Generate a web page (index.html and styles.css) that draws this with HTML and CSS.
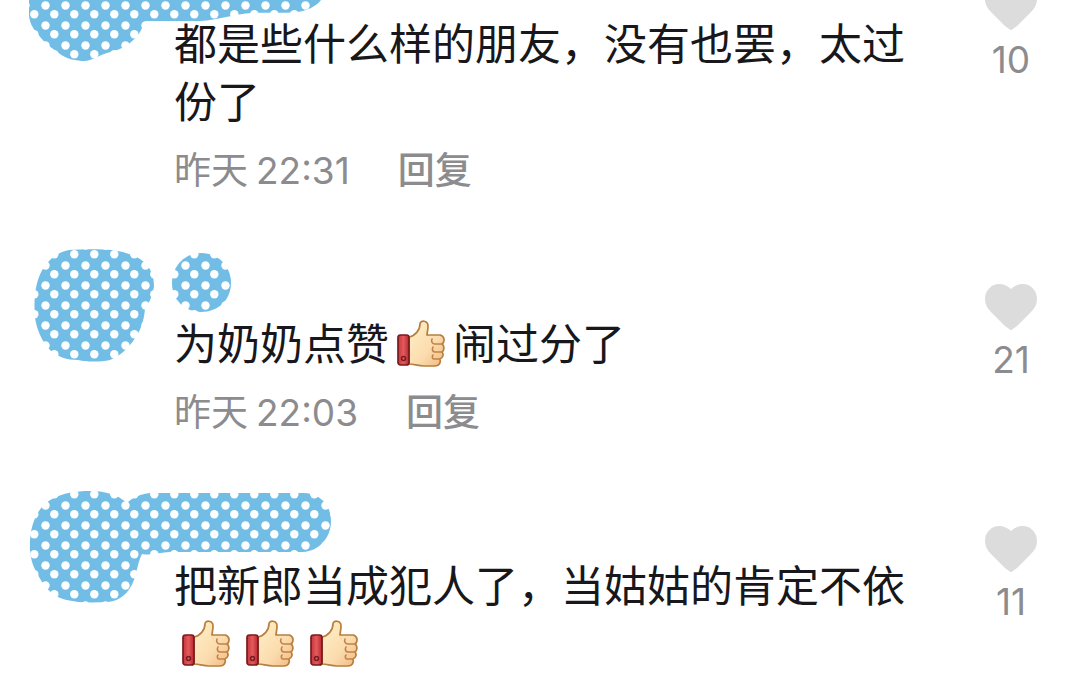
FILE: index.html
```
<!DOCTYPE html>
<html lang="zh-CN">
<head>
    <meta charset="UTF-8">
    <meta name="viewport" content="width=device-width, initial-scale=1.0">
    <title>评论</title>
    <link rel="stylesheet" href="styles.css">
</head>
<body>
    <svg class="defs" width="0" height="0" aria-hidden="true">
        <defs>
            <linearGradient id="skin" x1="0" y1="0" x2="1" y2="1">
                <stop offset="0" stop-color="#fff0c8"/>
                <stop offset="0.6" stop-color="#fbdcae"/>
                <stop offset="1" stop-color="#f2b77e"/>
            </linearGradient>
            <linearGradient id="cuff" x1="0" y1="0" x2="1" y2="0">
                <stop offset="0" stop-color="#c9353b"/>
                <stop offset="0.5" stop-color="#e25a5c"/>
                <stop offset="1" stop-color="#b8282f"/>
            </linearGradient>
        </defs>
        <symbol id="thumb" viewBox="0 0 48 48">
            <path d="M12 17C18 16 23 10 23 4C23 0 31 0 31 6C31 10 30 13 30 15H43C48 16 48 22 45 24C48 26 47 31 45 32C47 34 46 38 43 39C44 43 42 46 38 46H27C21 46 17 44 12 44Z" fill="url(#skin)" stroke="#b5803f" stroke-width="1.7" stroke-linejoin="round"/>
            <path d="M46 24H38C35 24 34 21 35 19M45 32H38C35 32 35 29 36 27M43 39H37C35 39 35 36 36 35" fill="none" stroke="#c08248" stroke-width="1.6" stroke-linecap="round"/>
            <rect x="1" y="15" width="11" height="30" rx="2.5" fill="url(#cuff)" stroke="#781b1e" stroke-width="1.7"/>
            <circle cx="6.5" cy="38.5" r="2" fill="#d95a5c" stroke="#781b1e" stroke-width="1.5"/>
        </symbol>
        <symbol id="heart" viewBox="0 0 52 46">
            <path d="M26 46C25 46 23 44 20 42L6 28C2 24 0 20 0 15C0 6 7 0 14 0C19 0 23 2 26 5C29 2 33 0 38 0C45 0 52 6 52 15C52 20 50 24 46 28L32 42C29 44 27 46 26 46Z" fill="#dcdcdc"/>
        </symbol>
    </svg>

    <main class="comments">
        <article class="comment">
            <div class="content">
                <p class="text">都是些什么样的朋友，没有也罢，太过份了</p>
                <div class="meta">
                    <span>昨天</span>
                    <time>22:31</time>
                    <button class="reply" type="button">回复</button>
                </div>
            </div>
            <button class="like" type="button" aria-label="赞 10">
                <svg class="heart" aria-hidden="true"><use href="#heart"/></svg>
                <span>10</span>
            </button>
        </article>

        <article class="comment">
            <div class="content">
                <p class="text">为奶奶点赞<svg class="emoji" role="img" aria-label="赞"><use href="#thumb"/></svg>闹过分了</p>
                <div class="meta">
                    <span>昨天</span>
                    <time>22:03</time>
                    <button class="reply" type="button">回复</button>
                </div>
            </div>
            <button class="like" type="button" aria-label="赞 21">
                <svg class="heart" aria-hidden="true"><use href="#heart"/></svg>
                <span>21</span>
            </button>
        </article>

        <article class="comment">
            <div class="content">
                <p class="text">把新郎当成犯人了，当姑姑的肯定不依<svg class="emoji" role="img" aria-label="赞"><use href="#thumb"/></svg><svg class="emoji" role="img" aria-label="赞"><use href="#thumb"/></svg><svg class="emoji" role="img" aria-label="赞"><use href="#thumb"/></svg></p>
            </div>
            <button class="like" type="button" aria-label="赞 11">
                <svg class="heart" aria-hidden="true"><use href="#heart"/></svg>
                <span>11</span>
            </button>
        </article>
    </main>

    <!-- dotted brush strokes that hide avatars and user names -->
    <svg class="strokes" aria-hidden="true">
        <defs>
            <pattern id="dots" width="20" height="20" patternUnits="userSpaceOnUse">
                <rect width="20" height="20" fill="#72bde6"/>
                <circle cx="5.5" cy="5.5" r="4.2" fill="#fff"/>
                <circle cx="14.3" cy="14.3" r="4.2" fill="#fff"/>
            </pattern>
        </defs>
        <g fill="url(#dots)">
            <path d="M29 0V14C29 22 33 29 38 34C44 43 52 48 60 54C67 59 76 61 85 61C94 60 99 55 107 53C116 51 123 48 130 43C137 37 141 32 143 25C143 22 145 21 149 21H200C218 20 235 14 252 13C270 12 289 14 303 11C311 9 318 4 321 0Z"/>
            <path d="M69 250C82 249 101 249 112 250C124 252 136 255 144 262C151 268 154 277 154 286C153 295 149 303 145 309C144 320 141 330 135 338C129 348 120 356 110 360C100 362 88 362 78 360C67 360 58 357 50 350C42 342 37 330 35 318C34 306 34 290 39 277C44 264 54 253 69 250Z"/>
            <path d="M201 253C218 253 231 266 231 283C231 300 218 312 201 312C185 312 172 300 172 283C172 266 185 253 201 253Z"/>
            <path d="M90 491C104 491 117 494 127 503C133 497 141 494 150 493H303C320 493 331 505 331 521C331 538 319 551 303 552H170C160 552 152 556 142 554C138 562 137 571 134 580C129 593 120 601 108 602C90 603 71 603 58 597C48 592 42 583 37 573C32 565 29 553 30 541C31 524 37 507 52 499C63 493 76 491 90 491Z"/>
        </g>
    </svg>
</body>
</html>
```
FILE: styles.css
```
* {
    box-sizing: border-box;
}
body {
    margin: 0;
    height: 100vh;
    overflow: hidden;
    position: relative;
    background-color: #fff;
    color: #17171c;
    font-family: Inter, "Noto Sans CJK SC", sans-serif;
}
.defs {
    display: block;
    width: 0;
    height: 0;
}
/* list is scrolled a little, so the first comment starts above the window */
.comments {
    display: flex;
    flex-direction: column;
    gap: 59px;
    margin-top: -43px;
}
.comment {
    display: grid;
    grid-template-columns: 1fr 138px;
    align-items: start;
    padding-left: 174px;
}
.content {
    padding-top: 55px;
}
.text {
    margin: 0;
    font-family: "Noto Sans CJK SC", sans-serif;
    font-size: 43px;
    line-height: 58px;
}
.emoji {
    width: 48px;
    height: 48px;
    margin: 0 8px;
    vertical-align: -8px;
}
.meta {
    display: flex;
    align-items: baseline;
    gap: 8px;
    margin-top: 16px;
    height: 54px;
    color: #8c8c8e;
    font-size: 37px;
    line-height: 54px;
}
button {
    border: none;
    padding: 0;
    background: none;
    font-family: inherit;
    font-size: 37px;
    cursor: pointer;
}
.reply {
    margin-left: 40px;
    color: #8c8c8e;
    font-weight: 500;
    line-height: 54px;
}
.like {
    display: flex;
    flex-direction: column;
    align-items: center;
    gap: 8px;
    padding-top: 27px;
    color: #8c8c8e;
    line-height: 44px;
}
.heart {
    width: 52px;
    height: 46px;
}
.strokes {
    position: absolute;
    top: 0;
    left: 0;
    width: 100%;
    height: 100%;
    pointer-events: none;
}
```
